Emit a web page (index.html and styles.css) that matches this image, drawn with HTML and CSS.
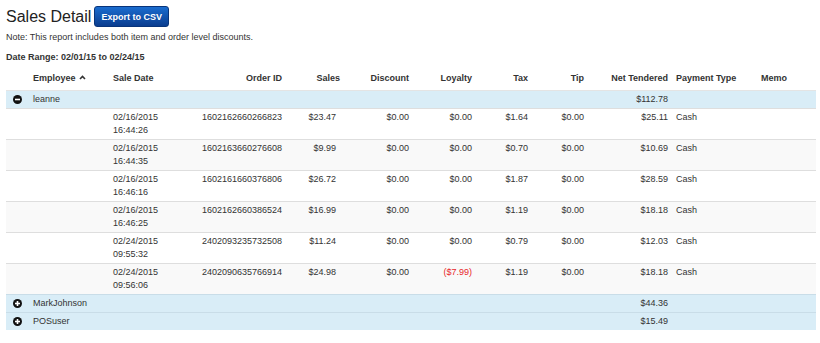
FILE: index.html
```html
<!DOCTYPE html>
<html>
<head>
<meta charset="utf-8">
<link rel="stylesheet" href="styles.css">
</head>
<body>
<div class="title-row">
  <h1 class="title">Sales Detail</h1>
  <button class="btn">Export to CSV</button>
</div>
<p class="note">Note: This report includes both item and order level discounts.</p>
<p class="range">Date Range: 02/01/15 to 02/24/15</p>
<table class="report">
  <colgroup>
    <col class="c-icon"><col class="c-emp"><col class="c-date"><col class="c-order"><col class="c-sales"><col class="c-disc"><col class="c-loy"><col class="c-tax"><col class="c-tip"><col class="c-net"><col class="c-pay"><col class="c-memo">
  </colgroup>
  <thead>
    <tr>
      <th></th>
      <th class="l">Employee <svg class="caret" width="7" height="5" viewBox="0 0 7 5"><path d="M1 4 L3.5 1.5 L6 4" fill="none" stroke="#333" stroke-width="1.6"/></svg></th>
      <th class="l">Sale Date</th>
      <th>Order ID</th>
      <th>Sales</th>
      <th>Discount</th>
      <th>Loyalty</th>
      <th>Tax</th>
      <th>Tip</th>
      <th>Net Tendered</th>
      <th class="l">Payment Type</th>
      <th class="l">Memo</th>
    </tr>
  </thead>
  <tbody>
    <tr class="group">
      <td class="ic"><svg width="9" height="9" viewBox="0 0 9 9"><circle cx="4.5" cy="4.5" r="4.5" fill="#111"/><rect x="2" y="3.7" width="5" height="1.6" fill="#fff"/></svg></td>
      <td class="l">leanne</td><td></td><td></td><td></td><td></td><td></td><td></td><td></td><td>$112.78</td><td></td><td></td>
    </tr>
    <tr class="item">
      <td></td><td></td><td class="l">02/16/2015 16:44:26</td><td>1602162660266823</td><td class="s">$23.47</td><td>$0.00</td><td>$0.00</td><td>$1.64</td><td>$0.00</td><td>$25.11</td><td class="l">Cash</td><td></td>
    </tr>
    <tr class="item alt">
      <td></td><td></td><td class="l">02/16/2015 16:44:35</td><td>1602163660276608</td><td class="s">$9.99</td><td>$0.00</td><td>$0.00</td><td>$0.70</td><td>$0.00</td><td>$10.69</td><td class="l">Cash</td><td></td>
    </tr>
    <tr class="item">
      <td></td><td></td><td class="l">02/16/2015 16:46:16</td><td>1602161660376806</td><td class="s">$26.72</td><td>$0.00</td><td>$0.00</td><td>$1.87</td><td>$0.00</td><td>$28.59</td><td class="l">Cash</td><td></td>
    </tr>
    <tr class="item alt">
      <td></td><td></td><td class="l">02/16/2015 16:46:25</td><td>1602162660386524</td><td class="s">$16.99</td><td>$0.00</td><td>$0.00</td><td>$1.19</td><td>$0.00</td><td>$18.18</td><td class="l">Cash</td><td></td>
    </tr>
    <tr class="item">
      <td></td><td></td><td class="l">02/24/2015 09:55:32</td><td>2402093235732508</td><td class="s">$11.24</td><td>$0.00</td><td>$0.00</td><td>$0.79</td><td>$0.00</td><td>$12.03</td><td class="l">Cash</td><td></td>
    </tr>
    <tr class="item alt">
      <td></td><td></td><td class="l">02/24/2015 09:56:06</td><td>2402090635766914</td><td class="s">$24.98</td><td>$0.00</td><td class="neg">($7.99)</td><td>$1.19</td><td>$0.00</td><td>$18.18</td><td class="l">Cash</td><td></td>
    </tr>
    <tr class="group">
      <td class="ic"><svg width="9" height="9" viewBox="0 0 9 9"><circle cx="4.5" cy="4.5" r="4.5" fill="#111"/><rect x="2" y="3.7" width="5" height="1.6" fill="#fff"/><rect x="3.7" y="2" width="1.6" height="5" fill="#fff"/></svg></td>
      <td class="l">MarkJohnson</td><td></td><td></td><td></td><td></td><td></td><td></td><td></td><td>$44.36</td><td></td><td></td>
    </tr>
    <tr class="group">
      <td class="ic"><svg width="9" height="9" viewBox="0 0 9 9"><circle cx="4.5" cy="4.5" r="4.5" fill="#111"/><rect x="2" y="3.7" width="5" height="1.6" fill="#fff"/><rect x="3.7" y="2" width="1.6" height="5" fill="#fff"/></svg></td>
      <td class="l">POSuser</td><td></td><td></td><td></td><td></td><td></td><td></td><td></td><td>$15.49</td><td></td><td></td>
    </tr>
  </tbody>
</table>
</body>
</html>
```
FILE: styles.css
```css
html, body {
  margin: 0;
  background: #fff;
}
body {
  padding: 6px 4px 0 6px;
  font-family: "Liberation Sans", Arial, Helvetica, sans-serif;
  font-size: 9px;
  color: #333;
}
.title-row {
  display: flex;
  align-items: center;
  gap: 3px;
  height: 21px;
}
.title {
  margin: 0;
  font-size: 16px;
  font-weight: normal;
  color: #222;
  line-height: 21px;
}
.btn {
  height: 21px;
  width: 75px;
  padding: 0;
  border: 1px solid #08347a;
  border-radius: 3px;
  background: linear-gradient(#1a6ccf, #0a3d8f);
  color: #fff;
  font-family: "Liberation Sans", Arial, sans-serif;
  font-size: 9px;
  font-weight: bold;
}
.note {
  margin: 4px 0 0;
  line-height: 12px;
}
.range {
  margin: 8px 0 0;
  line-height: 12px;
  font-weight: bold;
}
.report {
  margin-top: 4px;
  width: 810px;
  border-collapse: collapse;
  table-layout: fixed;
}
.c-icon { width: 23px; }
.c-emp { width: 80px; }
.c-date { width: 81px; }
.c-order { width: 96px; }
.c-sales { width: 58px; }
.c-disc { width: 69px; }
.c-loy { width: 63px; }
.c-tax { width: 56px; }
.c-tip { width: 56px; }
.c-net { width: 84px; }
.c-pay { width: 85px; }
.c-memo { width: 59px; }
th, td {
  padding: 2px 4px;
  line-height: 13px;
  text-align: right;
  vertical-align: top;
  white-space: normal;
}
th {
  padding: 5px 4px 5px;
  font-weight: bold;
  color: #333;
  border-bottom: 1px solid #e4e4e4;
}
th.l, td.l { text-align: left; }
.caret { margin-left: 1px; vertical-align: 1px; }
.group td {
  background: #d9edf7;
  border-top: 1px solid #c9dde8;
}
.item td {
  border-top: 1px solid #dedede;
}
.item.alt td {
  background: #f9f9f9;
}
td.s { padding-right: 8px; }
td.ic {
  text-align: left;
  padding-left: 7px;
}
td.ic svg { display: block; margin-top: 2px; }
td.neg { color: #e8262b; }
```
